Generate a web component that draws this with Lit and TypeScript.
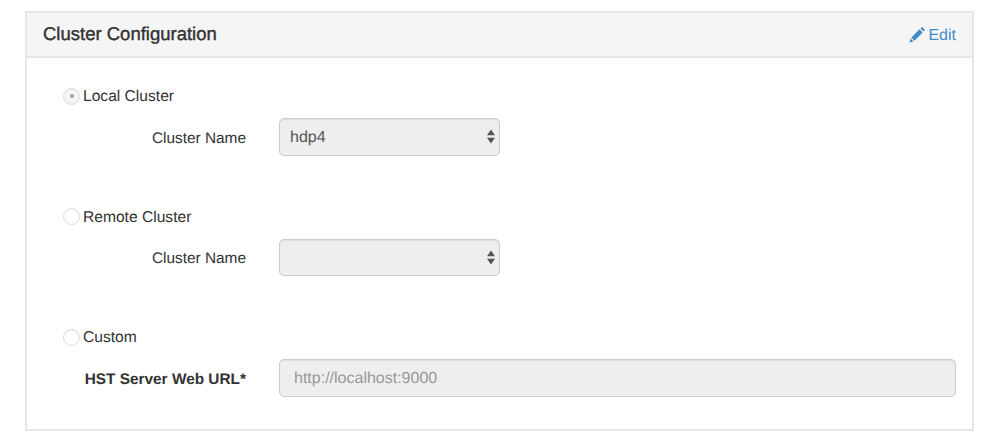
import { LitElement, html, css } from "lit";
import { customElement } from "lit/decorators.js";

const arrows = html`<svg class="arrows" width="8" height="15" viewBox="0 0 8 15"><path d="M4 0.5L8 6.2H0Z M4 14.5L0 8.8H8Z" fill="#555"/></svg>`;

@customElement("app-root")
export class AppRoot extends LitElement {
  static styles = css`
    :host { display: block; width: 999px; height: 442px; box-sizing: border-box; padding: 11px 25px 0; background: #fff; font-family: "Liberation Sans", Arial, sans-serif; color: #333; overflow: hidden; text-rendering: geometricPrecision; }
    .panel { border: 2px solid #e6e6e6; height: 420px; box-sizing: border-box; }
    .head { height: 45px; box-sizing: border-box; background: #f5f5f5; border-bottom: 2px solid #e6e6e6; display: flex; align-items: center; justify-content: space-between; padding: 0 16px; }
    .title { font-size: 18.5px; color: #333; -webkit-text-stroke: 0.4px #333; padding-bottom: 2px; }
    .edit { display: flex; align-items: center; gap: 3px; font-size: 16px; color: #428bca; }
    .edit-text { padding-top: 2px; }
    .body { padding: 27px 16px 0 36px; display: flex; flex-direction: column; gap: 40px; }
    .group { display: flex; flex-direction: column; gap: 11px; height: 80.5px; }
    .radio-row { display: flex; align-items: center; gap: 3px; height: 22px; font-size: 15.6px; }
    .radio-text { padding-top: 2px; }
    .radio { width: 15px; height: 15px; border-radius: 50%; border: 1px solid #dcdcdc; background: #fff; display: flex; align-items: center; justify-content: center; box-shadow: inset 0 1px 1px rgba(0,0,0,.04); }
    .radio.on { background: #f4f4f4; }
    .radio.on::after { content: ""; width: 4px; height: 4px; border-radius: 50%; background: #a0a0a0; }
    .field { display: flex; align-items: center; gap: 33px; font-size: 15.4px; }
    .label { width: 183px; text-align: right; flex: none; padding-top: 4px; }
    .label.bold { font-weight: 700; }
    .control { height: 37.5px; box-sizing: border-box; border: 1px solid #ccc; border-radius: 5px; background: #eee; box-shadow: inset 0 1px 1px rgba(0,0,0,.075); font-size: 16px; display: flex; align-items: center; padding: 0 4px 0 10px; color: #555; }
    .control-text { padding-top: 2px; }
    .select { width: 221px; justify-content: space-between; }
    .input { flex: 1; color: #999; padding-left: 14px; }
  `;

  render() {
    return html`
      <div class="panel">
        <div class="head">
          <div class="title">Cluster Configuration</div>
          <div class="edit">
            <svg width="16" height="16" viewBox="0 0 17 17"><path d="M0.5 16.5L1.6 12.2L4.8 15.4Z M2.5 11.2L11.2 2.5L14.5 5.8L5.8 14.5Z M12.2 1.5L13.2 0.6C13.6 0.2 14.2 0.2 14.6 0.6L16.4 2.4C16.8 2.8 16.8 3.4 16.4 3.8L15.5 4.8Z" fill="#428bca"/></svg>
            <span class="edit-text">Edit</span>
          </div>
        </div>
        <div class="body">
          <div class="group">
            <div class="radio-row"><span class="radio on"></span><span class="radio-text">Local Cluster</span></div>
            <div class="field"><span class="label">Cluster Name</span><div class="control select"><span class="control-text">hdp4</span>${arrows}</div></div>
          </div>
          <div class="group">
            <div class="radio-row"><span class="radio"></span><span class="radio-text">Remote Cluster</span></div>
            <div class="field"><span class="label">Cluster Name</span><div class="control select"><span></span>${arrows}</div></div>
          </div>
          <div class="group">
            <div class="radio-row"><span class="radio"></span><span class="radio-text">Custom</span></div>
            <div class="field"><span class="label bold">HST Server Web URL*</span><div class="control input"><span class="control-text">http://localhost:9000</span></div></div>
          </div>
        </div>
      </div>
    `;
  }
}
